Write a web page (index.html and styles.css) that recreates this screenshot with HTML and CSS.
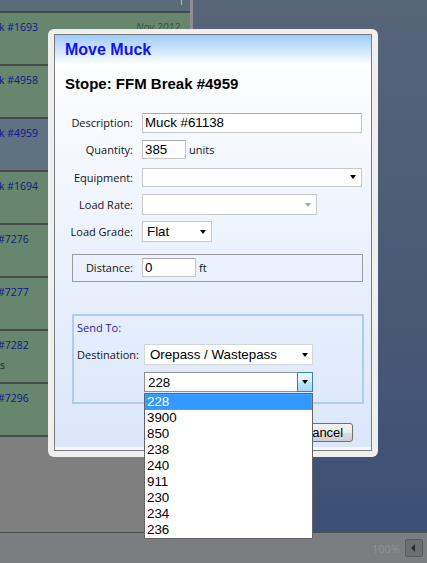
FILE: index.html
```html
<!DOCTYPE html>
<html lang="en">
<head>
    <meta charset="UTF-8">
    <meta name="viewport" content="width=device-width, initial-scale=1.0">
    <title>Move Muck</title>
    <link rel="stylesheet" href="styles.css">
</head>
<body>
    <div class="app">
        <div class="main">
            <div class="list-pane">
                <div class="list-head"></div>
                <div class="stope-row"><span class="stope-name">k #1693</span><span class="stope-date">Nov 2012</span></div>
                <div class="stope-row"><span class="stope-name">k #4958</span><span class="stope-date">Nov 2012</span></div>
                <div class="stope-row selected"><span class="stope-name">k #4959</span><span class="stope-date">Nov 2012</span></div>
                <div class="stope-row"><span class="stope-name">k #1694</span><span class="stope-date">Nov 2012</span></div>
                <div class="stope-row"><span class="stope-name cut">#7276</span><span class="stope-date">Dec 2012</span></div>
                <div class="stope-row"><span class="stope-name cut">#7277</span><span class="stope-date">Dec 2012</span></div>
                <div class="stope-row"><span class="stope-name cut">#7282</span><span class="stope-date">Dec 2012</span><span class="stope-note">s</span></div>
                <div class="stope-row"><span class="stope-name cut">#7296</span><span class="stope-date">Dec 2012</span></div>
            </div>
            <div class="map-pane"></div>
        </div>
        <div class="status-bar">
            <span class="zoom-level">100%</span>
            <button class="zoom-btn"></button>
        </div>
    </div>

    <!-- modal: move muck -->
    <div class="dialog">
        <div class="dialog-body">
            <div class="dialog-head"><h2>Move Muck</h2></div>
            <h3 class="stope-title">Stope: FFM Break #4959</h3>

            <div class="fields">
                <div class="field">
                    <label>Description:</label>
                    <input class="text-input desc" value="Muck #61138">
                </div>
                <div class="field">
                    <label>Quantity:</label>
                    <input class="text-input qty" value="385">
                    <span class="unit">units</span>
                </div>
                <div class="field">
                    <label>Equipment:</label>
                    <div class="select equip"></div>
                </div>
                <div class="field">
                    <label>Load Rate:</label>
                    <div class="select rate disabled"></div>
                </div>
                <div class="field">
                    <label>Load Grade:</label>
                    <div class="select grade">Flat</div>
                </div>
            </div>

            <div class="distance-box">
                <div class="field">
                    <label>Distance:</label>
                    <input class="text-input dist" value="0">
                    <span class="unit">ft</span>
                </div>
            </div>

            <div class="send-box">
                <div class="send-title">Send To:</div>
                <div class="field dest">
                    <label>Destination:</label>
                    <div class="select dest-select">Orepass / Wastepass</div>
                </div>
                <div class="combo">
                    <input class="combo-input" value="228">
                    <span class="combo-btn"></span>
                    <ul class="combo-list">
                        <li class="active">228</li>
                        <li>3900</li>
                        <li>850</li>
                        <li>238</li>
                        <li>240</li>
                        <li>911</li>
                        <li>230</li>
                        <li>234</li>
                        <li>236</li>
                    </ul>
                </div>
            </div>

            <div class="buttons">
                <button class="btn ok">OK</button>
                <button class="btn">Cancel</button>
            </div>
        </div>
    </div>
</body>
</html>
```

FILE: styles.css
```css
* {
    box-sizing: border-box;
}
body {
    margin: 0;
    width: 427px;
    height: 563px;
    overflow: hidden;
    font-family: "Open Sans", sans-serif;
}

/* background app (dimmed behind the modal) */
.app {
    height: 563px;
    display: flex;
    flex-direction: column;
}
.main {
    flex: 1;
    display: flex;
    min-height: 0;
}
.list-pane {
    width: 193px;
    background: #7f7f7f;
    border-right: 3px solid #8b8f94;
}
.list-head {
    height: 13px;
    background: #5c6b78;
    border-bottom: 2px solid #434c4b;
    position: relative;
}
.list-head::after {
    content: "";
    position: absolute;
    left: 181px;
    top: 0;
    width: 1px;
    height: 5px;
    background: #b4bac1;
}
.stope-row {
    height: 53px;
    background: #66876d;
    border-bottom: 2px solid #434c4b;
    padding: 7px 10px 0 0;
    display: flex;
    flex-wrap: wrap;
    justify-content: space-between;
    align-content: flex-start;
    font-size: 10.5px;
    line-height: 14px;
    color: #11168a;
}
.stope-row.selected {
    background: #5d7283;
}
.stope-name {
    margin-left: -1px;
}
.stope-name.cut {
    margin-left: -2px;
}
.stope-date {
    font-size: 10.5px;
    font-style: italic;
    color: #3c4b45;
}
.stope-note {
    width: 100%;
    margin-top: 6px;
    color: #1c2a30;
}
.map-pane {
    flex: 1;
    background: linear-gradient(180deg, #576579 0%, #4b5b75 50%, #3c5077 100%);
}
.status-bar {
    height: 31px;
    border-top: 1px solid #505152;
    background: #7b7d80;
    display: flex;
    align-items: center;
    justify-content: flex-end;
    gap: 5px;
    padding-right: 4px;
}
.zoom-level {
    font-size: 11px;
    color: #929395;
}
.zoom-btn {
    width: 18px;
    height: 18px;
    padding: 0;
    background: #6d6e70;
    border: 1px solid #58595b;
    border-radius: 2px;
    position: relative;
}
.zoom-btn::after {
    content: "";
    position: absolute;
    left: 5px;
    top: 4px;
    border-top: 4px solid transparent;
    border-bottom: 4px solid transparent;
    border-right: 4px solid #2a2a2a;
}

/* dialog */
.dialog {
    position: absolute;
    left: 48px;
    top: 29px;
    width: 330px;
    height: 428px;
    background: #efefef;
    border-radius: 6px;
    padding: 5px 6px 6px 6px;
}
.dialog-body {
    height: 100%;
    border: 1px solid #7b7b7b;
    background: linear-gradient(180deg, #ffffff 0%, #dae6fb 100%);
    box-shadow: inset 0 -3px 0 #f3f7ff;
}
.dialog-head {
    background: linear-gradient(180deg, #9dcbfa 0%, #ffffff 90%);
    padding: 5px 10px 8px;
}
.dialog-head h2 {
    margin: 0;
    font-family: "Liberation Sans", Arial, sans-serif;
    font-size: 16px;
    line-height: 20px;
    color: #1010ff;
}
.stope-title {
    margin: 7px 10px 0;
    font-family: "Liberation Sans", Arial, sans-serif;
    font-size: 15px;
    line-height: 18px;
    color: #000;
}

.fields {
    margin-top: 16px;
    padding-right: 9px;
}
.field {
    display: flex;
    align-items: center;
    height: 27.3px;
}
.field label {
    width: 78px;
    margin-right: 9px;
    text-align: right;
    font-size: 11px;
    line-height: 15px;
    color: #141414;
}
.unit {
    margin-left: 3px;
    font-size: 11px;
    color: #141414;
}

.text-input {
    margin: 0;
    height: 20px;
    padding: 0 2px;
    border: 1px solid #c4c4c4;
    border-top-color: #a8a8a8;
    background: #fff;
    color: #000;
    font: 13.33px "Liberation Sans", Arial, sans-serif;
    outline: none;
}
.text-input.desc {
    width: 220px;
}
.text-input.qty {
    width: 44px;
    height: 19px;
}
.text-input.dist {
    width: 54px;
    height: 19px;
}

.select {
    position: relative;
    height: 21px;
    padding-left: 4px;
    border: 1px solid #c8c8c8;
    background: #fff;
    font: 13.33px/19px "Liberation Sans", Arial, sans-serif;
    color: #000;
}
.select::after {
    content: "";
    position: absolute;
    right: 5px;
    top: 50%;
    margin-top: -2px;
    border-left: 3px solid transparent;
    border-right: 3px solid transparent;
    border-top: 4px solid #000;
}
.select.equip {
    width: 220px;
    height: 19px;
    line-height: 17px;
}
.select.rate {
    width: 175px;
}
.select.disabled::after {
    border-top-color: #a6a6a6;
}
.select.grade {
    width: 70px;
}

.distance-box {
    margin: 9px 8px 0 17px;
    border: 1px solid #9a9a9a;
    padding: 3px 0 4px;
}
.distance-box .field {
    height: 19px;
}
.distance-box .field label {
    width: 60px;
}

.send-box {
    margin: 32px 7px 0 17px;
    border: 2px solid #aecbf5;
    padding: 5px 0 10px 3px;
}
.send-title {
    font-size: 11px;
    line-height: 14px;
    color: #2323a0;
}
.field.dest {
    height: 21px;
    margin-top: 9px;
}
.field.dest label {
    width: 61px;
    margin-right: 6px;
    text-align: left;
}
.select.dest-select {
    width: 169px;
    padding-left: 5px;
    border-color: #d6d6d6;
}
.select.dest-select::after {
    right: 4px;
}

/* editable combo with its open list */
.combo {
    position: relative;
    display: flex;
    width: 169px;
    height: 20px;
    margin: 7px 0 0 67px;
}
.combo-input {
    flex: 1;
    min-width: 0;
    margin: 0;
    height: 20px;
    padding: 0 3px;
    border: 1px solid #8e8f8f;
    border-right: 0;
    background: #fff;
    font: 13.33px "Liberation Sans", Arial, sans-serif;
    outline: none;
}
.combo-btn {
    position: relative;
    width: 16px;
    height: 20px;
    border: 1px solid #3c7fb1;
    background: linear-gradient(180deg, #eaf6fd 0%, #d9f0fc 50%, #bee6fd 51%, #a7d9f5 100%);
}
.combo-btn::after {
    content: "";
    position: absolute;
    left: 4px;
    top: 7px;
    border-left: 3px solid transparent;
    border-right: 3px solid transparent;
    border-top: 4px solid #000;
}
.combo-list {
    position: absolute;
    left: 0;
    top: 21px;
    width: 169px;
    margin: 0;
    padding: 0;
    list-style: none;
    background: #fff;
    border: 1px solid #646464;
    z-index: 10;
}
.combo-list li {
    height: 16px;
    padding-left: 2px;
    font: 13.33px/16px "Liberation Sans", Arial, sans-serif;
    color: #000;
}
.combo-list li.active {
    background: #3399ff;
    color: #fff;
    outline: 1px dotted #d88b3a;
    outline-offset: -1px;
}

.buttons {
    display: flex;
    justify-content: flex-end;
    gap: 6px;
    margin-top: 19px;
    padding-right: 18px;
}
.btn {
    width: 60px;
    height: 19px;
    padding: 0;
    border: 1px solid #707070;
    border-radius: 3px;
    background: linear-gradient(180deg, #f2f2f2 0%, #ebebeb 50%, #dddddd 51%, #cfcfcf 100%);
    font: 13px "Liberation Sans", Arial, sans-serif;
    color: #000;
}
.btn.ok {
    width: 50px;
}
```
